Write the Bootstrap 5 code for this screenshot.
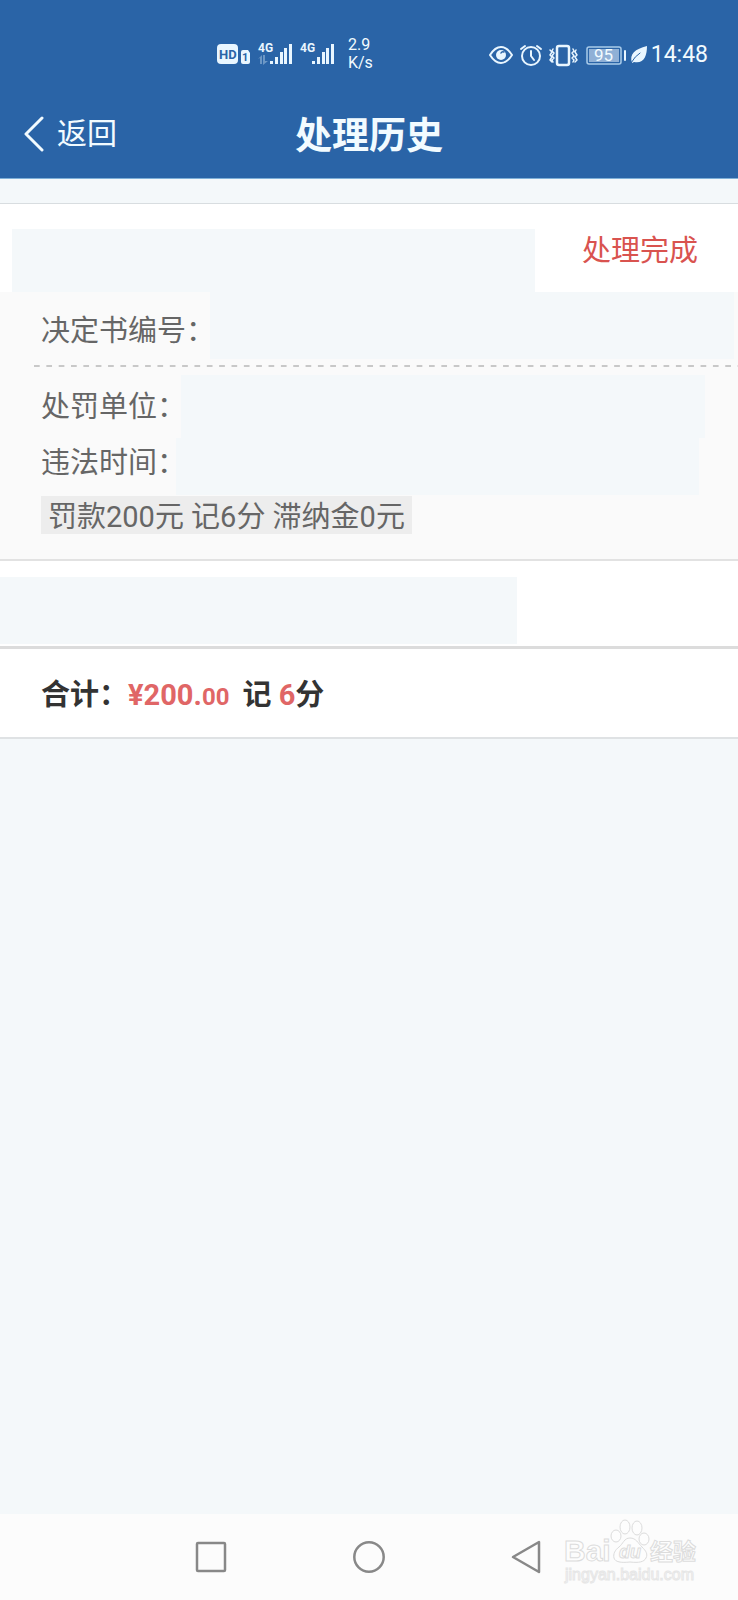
<!DOCTYPE html>
<html lang="zh-CN">
<head>
<meta charset="utf-8">
<meta name="viewport" content="width=device-width, initial-scale=1">
<title>处理历史</title>
<link rel="stylesheet" href="https://cdn.jsdelivr.net/npm/bootstrap@5.3.0/dist/css/bootstrap.min.css">
<style>
  body { background: #f4f8fa; color: #666; font-family: Roboto, "Noto Sans CJK SC", sans-serif; font-size: 29px; line-height: 38px; }
  .app-top { background: #2a64a7; color: #f2fbff; border-bottom: 1px solid #7fb0d8; }
  .status-bar { height: 90px; padding: 36px 30px 0 29.4%; }
  .status-bar svg { display: block; flex: none; }
  .net-speed { font-size: 16px; line-height: 18px; }
  .clock { font-size: 23px; line-height: 28px; padding-top: 1px; }
  .title-bar { height: 88px; padding-top: 25px; }
  .title-bar h1 { font-size: 37px; line-height: 44px; font-weight: 700; }
  .back-btn { left: 24px; top: 23px; color: inherit; gap: 13px; font-size: 30px; line-height: 42px; }
  .record { margin-top: 24px; border-top: 1px solid #d8dde0; border-bottom: 2px solid #e2e2e2; background: #fff; }
  .record-head { height: 88px; padding-left: 12px; }
  .hidden-value { background: #f4f8fa; }
  .head-value { width: 72%; margin-top: 25px; }
  .done { color: #d9534f; padding: 28px 40px 0 0; }
  .record-body { background: #fafafa; padding-bottom: 25px; }
  .field dt { font-weight: 400; padding-left: 41px; white-space: nowrap; flex: none; }
  .f-number { height: 67px; padding-right: 4px; }
  .f-number dt { width: 210px; padding-top: 20px; }
  .f-unit { height: 63px; padding-right: 33px; }
  .f-unit dt { width: 181px; padding-top: 13px; }
  .f-time { height: 57px; padding-right: 39px; }
  .f-time dt { width: 176px; padding-top: 6px; }
  .dash-line { height: 2px; margin: 6px 0 8px 34px;
    background: linear-gradient(to right, #c8c8c8 50%, transparent 50%) 0 0 / calc(100% / 57) 2px repeat-x; }
  .penalty { margin: 1px 0 0 41px; padding: 4px 7px 0; line-height: 34px; background: #ededed; }
  .extra { height: 88px; padding: 16px 0 2px; background: #fff; border-bottom: 3px solid #dcdcdc; }
  .extra .hidden-value { width: 70%; }
  .total { background: #fff; color: #333; font-weight: 700; padding: 27px 41px 21px; border-bottom: 2px solid #dfe2e4; }
  .total .num { color: #e06666; }
  .total .cents { font-size: 24px; }
  .total .points { margin-left: 13px; }
  .nav-keys { background: #fcfcfc; height: 86px; gap: 126px; }
  .nav-keys svg { display: block; }
  .watermark { right: 36px; top: 4px; }
</style>
</head>
<body class="d-flex flex-column min-vh-100">

<header class="app-top">
  <div class="status-bar d-flex justify-content-between align-items-start">
    <div class="d-flex align-items-center">
      <svg width="131" height="36" viewBox="0 0 131 36" fill="#e9f6ff" font-family="Roboto, sans-serif" font-weight="700">
        <rect x="0" y="8" width="21" height="20" rx="4"/>
        <text x="2" y="23" font-size="13" fill="#2a64a7">HD</text>
        <path d="M26 14h5l2 3v9a2 2 0 0 1-2 2h-5a2 2 0 0 1-2-2V16a2 2 0 0 1 2-2z"/>
        <text x="25" y="25" font-size="11" fill="#2a64a7">1</text>
        <text x="41" y="16" font-size="12">4G</text>
        <g opacity=".35"><path d="M41 23l4-4v9h-2v-6zM46 19h2v6h3l-5 4z"/></g>
        <path d="M53 25h3v3h-3zM58 21h3v7h-3zM63 16h3v12h-3zM67 12h3v16h-3zM72 8h3v20h-3z"/>
        <text x="83" y="16" font-size="12">4G</text>
        <path d="M95 25h3v3h-3zM100 21h3v7h-3zM105 16h3v12h-3zM109 12h3v16h-3zM114 8h3v20h-3z"/>
      </svg>
      <div class="net-speed">2.9<br>K/s</div>
    </div>
    <div class="d-flex align-items-center pt-1">
      <svg width="162" height="28" viewBox="0 0 162 28" fill="none" stroke="#e9f6ff" stroke-width="2" stroke-linecap="round" stroke-linejoin="round">
        <path d="M1 14Q6 6 12 6t11 8Q18 22 12 22T1 14z"/>
        <circle cx="12" cy="14" r="5" fill="#e9f6ff" stroke="none"/>
        <path d="M12 12q1-2 3-1" stroke="#2a64a7" stroke-width="1.5"/>
        <circle cx="42" cy="15" r="9"/>
        <path d="M42 10v5l3 4M32 8l4-3M52 8l-4-3"/>
        <rect x="68" y="5" width="12" height="19" rx="2" stroke-width="2.5"/>
        <path d="M61 9l2 2-2 3 2 2-2 3 2 2M64 8l-1 2 2 2-2 3 2 2-2 2 1 2M84 8l1 2-2 2 2 3-2 2 2 2-1 2M87 9l-1 2 2 3-2 2 2 3-2 2" stroke-width="1.5"/>
        <rect x="98" y="6" width="34" height="17" rx="2" stroke="#a9cbea" stroke-width="1.5"/>
        <rect x="100" y="8" width="30" height="13" fill="#8fb0d6" stroke="none"/>
        <text x="105" y="20" font-family="Roboto, sans-serif" font-size="17" fill="#f2fbff" stroke="none">95</text>
        <path d="M136 10v9"/>
        <path d="M143 22C140 13 146 8 158 5c0 10-3 18-13 16" fill="#e9f6ff" stroke="none"/>
        <path d="M142 22q4-7 9-10" stroke="#2a64a7" stroke-width="1"/>
      </svg>
      <span class="clock">14:48</span>
    </div>
  </div>
  <div class="title-bar position-relative text-center">
    <button type="button" class="back-btn btn border-0 p-0 position-absolute d-flex align-items-center">
      <svg width="20" height="36" viewBox="0 0 20 36" fill="none" stroke="#f2fbff" stroke-width="3" stroke-linecap="round" stroke-linejoin="round"><path d="M18 2L2 18l16 16"/></svg>
      返回
    </button>
    <h1 class="m-0">处理历史</h1>
  </div>
</header>

<main class="flex-grow-1">
  <section class="record">
    <div class="record-head d-flex justify-content-between">
      <div class="hidden-value head-value"></div>
      <div class="done text-nowrap">处理完成</div>
    </div>
    <div class="record-body">
      <dl class="m-0">
        <div class="field f-number d-flex"><dt>决定书编号：</dt><dd class="hidden-value flex-grow-1 m-0"></dd></div>
        <div class="dash-line"></div>
        <div class="field f-unit d-flex"><dt>处罚单位：</dt><dd class="hidden-value flex-grow-1 m-0"></dd></div>
        <div class="field f-time d-flex"><dt>违法时间：</dt><dd class="hidden-value flex-grow-1 m-0"></dd></div>
      </dl>
      <div class="d-flex"><div class="penalty">罚款200元 记6分 滞纳金0元</div></div>
    </div>
  </section>
  <section class="extra"><div class="hidden-value h-100"></div></section>
  <section class="total">合计：<span class="num">¥200.<span class="cents">00</span></span><span class="points">记 <span class="num">6</span>分</span></section>
</main>

<footer class="nav-keys position-relative d-flex justify-content-center align-items-center">
  <button type="button" class="btn border-0 p-0" aria-label="最近任务"><svg width="32" height="34" viewBox="0 0 32 34" fill="none" stroke="#888" stroke-width="2.5"><rect x="2" y="3" width="28" height="28" rx="1"/></svg></button>
  <button type="button" class="btn border-0 p-0" aria-label="主屏幕"><svg width="32" height="34" viewBox="0 0 32 34" fill="none" stroke="#888" stroke-width="2.5"><circle cx="16" cy="17" r="14.7"/></svg></button>
  <button type="button" class="btn border-0 p-0" aria-label="返回"><svg width="32" height="34" viewBox="0 0 32 34" fill="none" stroke="#888" stroke-width="2.5" stroke-linejoin="round"><path d="M2 17L28 2v30z"/></svg></button>
  <svg class="watermark position-absolute" width="140" height="80" viewBox="0 0 140 80" fill="#fdfdfd" stroke="#dcdcdc" stroke-width="1">
    <text x="2" y="43" font-family="Liberation Sans, sans-serif" font-weight="700" font-size="30">Bai</text>
    <ellipse cx="54" cy="18" rx="5" ry="6"/><ellipse cx="63" cy="9" rx="5" ry="7"/><ellipse cx="75" cy="10" rx="5" ry="7"/><ellipse cx="82" cy="21" rx="5" ry="6"/>
    <path d="M68 20c6 0 8 5 12 9s6 7 4 11-7 5-16 4c-9 1-15 0-16-4s1-8 5-11 5-9 11-9z"/>
    <text x="57" y="40" font-family="Liberation Sans, sans-serif" font-weight="700" font-style="italic" font-size="18">du</text>
    <text x="88" y="42" font-family="Noto Sans CJK SC, sans-serif" font-weight="700" font-size="23">经验</text>
    <text x="3" y="62" font-family="Liberation Sans, sans-serif" font-size="16" stroke="#e6e6e6">jingyan.baidu.com</text>
  </svg>
</footer>

<script src="https://cdn.jsdelivr.net/npm/bootstrap@5.3.0/dist/js/bootstrap.bundle.min.js"></script>
</body>
</html>
